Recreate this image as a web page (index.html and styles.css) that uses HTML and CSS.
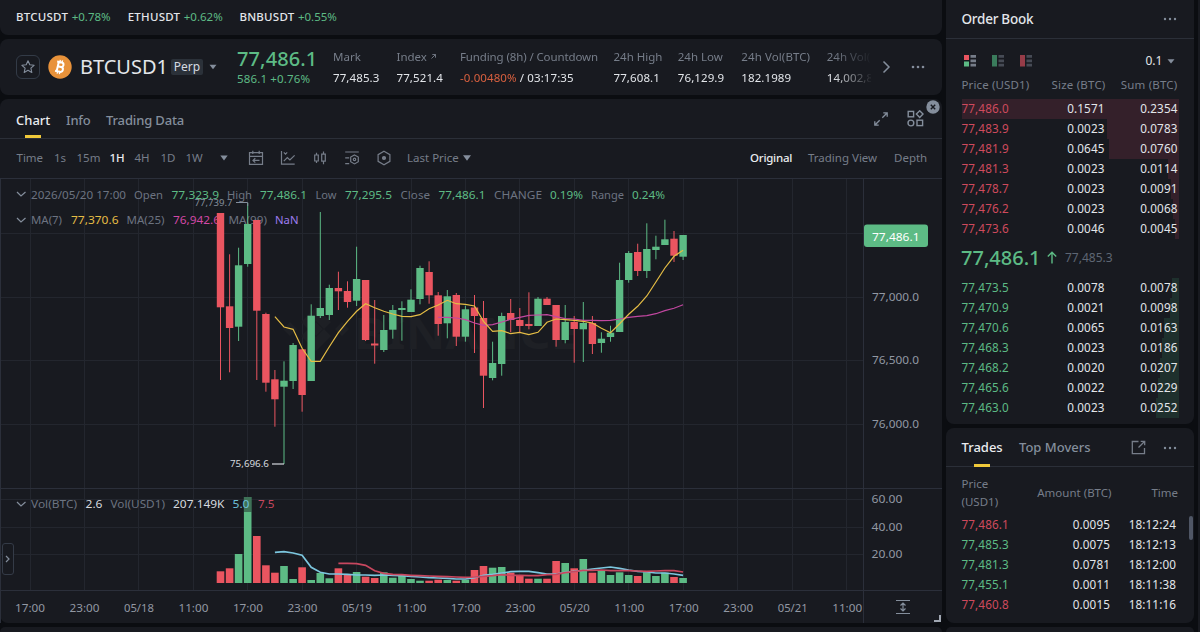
FILE: index.html
```html
<!DOCTYPE html>
<html lang="en">
<head>
<meta charset="utf-8">
<title>BTCUSD1 Perp</title>
<link rel="stylesheet" href="styles.css">
</head>
<body>
<div class="app">
  <main class="left">
    <section class="panel ticker">
      <span class="pair p1"><b>BTCUSDT</b> <i class="up">+0.78%</i></span>
      <span class="pair p2"><b>ETHUSDT</b> <i class="up">+0.62%</i></span>
      <span class="pair p3"><b>BNBUSDT</b> <i class="up">+0.55%</i></span>
    </section>

    <section class="panel header">
      <div class="fav"><svg width="16" height="16" viewBox="0 0 16 16"><path d="M8 1.800l1.800 4 4.300.5-3.200 2.900.9 4.300L8 11.300l-3.800 2.200.9-4.300L1.900 6.300l4.300-.5z" fill="none" stroke="#848e9c" stroke-width="1.1" stroke-linejoin="round"/></svg></div>
      <svg class="coin" width="24" height="24" viewBox="0 0 24 24"><circle cx="12" cy="12" r="11.700" fill="#e8923a"/><g transform="rotate(13 12 12)" fill="none" stroke="#fff"><path d="M9.700 7.300v9.400M8 7.300h4.700a2.200 2.200 0 0 1 0 4.500H9.700h3.300a2.400 2.400 0 0 1 0 4.900H8" stroke-width="2"/><path d="M10.700 4.900v2.400M13 4.900v2.400M10.700 16.700v2.400M13 16.700v2.400" stroke-width="1.300"/></g></svg>
      <h1 class="symbol">BTCUSD1</h1>
      <span class="perp">Perp</span>
      <svg class="caret" width="8" height="6" viewBox="0 0 8 6"><path d="M.5.8h7L4 5.300z" fill="#848e9c"/></svg>
      <div class="last"><div class="last-price">77,486.1</div><div class="last-change">586.1 +0.76%</div></div>
      <div class="stats">
        <div><span class="lbl">Mark</span><span class="val">77,485.3</span></div>
        <div><span class="lbl">Index<svg width="5" height="5" viewBox="0 0 5 5"><path d="M.5 4.500l4-4M1.300.5h3.200v3.200" fill="none" stroke="#767d89" stroke-width=".9"/></svg></span><span class="val">77,521.4</span></div>
        <div><span class="lbl">Funding (8h) / Countdown</span><span class="val"><em>-0.00480%</em> / 03:17:35</span></div>
        <div><span class="lbl">24h High</span><span class="val">77,608.1</span></div>
        <div><span class="lbl">24h Low</span><span class="val">76,129.9</span></div>
        <div><span class="lbl">24h Vol(BTC)</span><span class="val">182.1989</span></div>
        <div><span class="lbl">24h Vol(USD1)</span><span class="val">14,002,818.6</span></div>
      </div>
      <svg class="next" width="9" height="14" viewBox="0 0 9 14"><path d="M1.500 1.500L7 7l-5.500 5.500" fill="none" stroke="#848e9c" stroke-width="1.500"/></svg>
      <svg class="dots" width="14" height="4" viewBox="0 0 14 4" fill="#848e9c"><circle cx="2" cy="2" r="1.300"/><circle cx="7" cy="2" r="1.300"/><circle cx="12" cy="2" r="1.300"/></svg>
    </section>

    <section class="panel chart-panel">
      <nav class="tabs">
        <a class="tab on t1">Chart</a><a class="tab t2">Info</a><a class="tab t3">Trading Data</a>
        <svg class="expand" width="16" height="16" viewBox="0 0 16 16" fill="none" stroke="#848e9c" stroke-width="1.300"><path d="M9.300 6.700l4.500-4.500M10.300 1.800h3.900v3.900M6.700 9.300l-4.500 4.500M1.800 10.300v3.900h3.900"/></svg>
        <svg class="widgets" width="17" height="17" viewBox="0 0 17 17" fill="none" stroke="#848e9c" stroke-width="1.400"><rect x="1.200" y="1.400" width="5.400" height="5.400"/><path d="M12.700.8l3.300 3.300-3.300 3.300-3.300-3.300z"/><circle cx="3.900" cy="13" r="2.900"/><rect x="10" y="10.200" width="5.600" height="5.400"/></svg>
      </nav>
      <div class="close"><svg width="14" height="14" viewBox="0 0 14 14"><circle cx="7" cy="7" r="6.700" fill="#848e9c"/><path d="M4.800 4.800l4.400 4.400M9.200 4.800L4.800 9.200" stroke="#181a20" stroke-width="1.400"/></svg></div>
      <div class="toolbar">
        <span>Time</span><span>1s</span><span>15m</span><span class="on">1H</span><span>4H</span><span>1D</span><span>1W</span>
        <svg width="8" height="6" viewBox="0 0 8 6"><path d="M.3.6h7.400L4 5.600z" fill="#848e9c"/></svg>
        <svg width="16" height="16" viewBox="0 0 16 16" fill="none" stroke="#767d89" stroke-width="1.200"><path d="M1.500 2.700h13v11.700h-13zM1.500 6.300h13M4.800.8v3.200M11.200.8v3.200M11.500 10.400H5M7.300 8.200L5 10.400l2.300 2.200"/></svg>
        <svg width="16" height="16" viewBox="0 0 16 16" fill="none" stroke="#767d89" stroke-width="1.200"><path d="M1.500 1v13.200h13.200M3.800 11.200l3.500-3.700 2.600 2.500 4.700-4.600M3.800 2.400l1.700 1.700 1.700-1.700"/></svg>
        <svg width="16" height="16" viewBox="0 0 16 16" fill="none" stroke="#767d89" stroke-width="1.200"><path d="M2.700 5h3.600v6H2.700zM4.500 2.800V5M4.500 11v2M9.700 4.200h3.600v7H9.700zM11.500 1.500v2.700M11.500 11.200v3.100"/></svg>
        <svg width="16" height="16" viewBox="0 0 16 16" fill="none" stroke="#767d89" stroke-width="1.200"><path d="M1.200 2h13.600M1.200 7.800h4M1.200 13.600h4M10.500 4.900l3.800 2.200v4.600l-3.800 2.200-3.800-2.200V7.100z"/><circle cx="10.500" cy="9.400" r="1.200"/></svg>
        <svg width="16" height="16" viewBox="0 0 16 16" fill="none" stroke="#767d89" stroke-width="1.200"><path d="M8 1.300l5.900 3.400v6.600L8 14.700l-5.900-3.400V4.700z"/><circle cx="8" cy="8" r="1.500" fill="#767d89"/></svg>
        <span class="lp">Last Price</span>
        <svg width="8" height="6" viewBox="0 0 8 6"><path d="M0 .3h8L4 5.800z" fill="#848e9c"/></svg>
        <span class="on orig">Original</span><span class="tv">Trading View</span><span>Depth</span>
      </div>
      <svg id="chart" class="chart" width="942" height="445" viewBox="0 178 942 445"></svg>
    </section>
    <section class="panel below"></section>
  </main>

  <aside class="right">
    <section class="panel book">
      <div class="head"><h2>Order Book</h2>
        <svg width="14" height="4" viewBox="0 0 14 4" fill="#848e9c"><circle cx="2" cy="2" r="1.200"/><circle cx="7" cy="2" r="1.200"/><circle cx="12" cy="2" r="1.200"/></svg>
      </div>
      <div class="modes">
        <svg width="12" height="12" viewBox="0 0 12 12"><path d="M0 0h5v5H0z" fill="#ea5560"/><path d="M0 6.500h5v5H0z" fill="#5dbb85"/><path d="M6.500 0H12v2.700H6.500zM6.500 4.400H12v2.800H6.500zM6.500 8.800H12v2.700H6.500z" fill="#767d89"/></svg>
        <svg width="12" height="12" viewBox="0 0 12 12"><path d="M0 0h5v11.500H0z" fill="#3a7c5c"/><path d="M6.500 0H12v2.700H6.500zM6.500 4.400H12v2.800H6.500zM6.500 8.800H12v2.700H6.500z" fill="#464b55"/></svg>
        <svg width="12" height="12" viewBox="0 0 12 12"><path d="M0 0h5v11.500H0z" fill="#963c48"/><path d="M6.500 0H12v2.700H6.500zM6.500 4.400H12v2.800H6.500zM6.500 8.800H12v2.700H6.500z" fill="#464b55"/></svg>
        <span class="step">0.1</span>
        <svg width="8" height="5" viewBox="0 0 8 5"><path d="M.5.3h7L4 4.600z" fill="#848e9c"/></svg>
      </div>
      <div class="cols"><span>Price (USD1)</span><span>Size (BTC)</span><span>Sum (BTC)</span></div>
      <div id="asks" class="rows sell"></div>
      <div class="mid"><strong>77,486.1</strong>
        <svg width="10" height="13" viewBox="0 0 10 13"><path d="M5 12.500V1.300M.8 5.500L5 1.200l4.200 4.300" fill="none" stroke="#5dbb85" stroke-width="1.400"/></svg>
        <span>77,485.3</span></div>
      <div id="bids" class="rows buy"></div>
    </section>
    <section class="panel trades">
      <div class="ttabs"><a class="tab on">Trades</a><a class="tab movers">Top Movers</a>
        <svg width="15" height="15" viewBox="0 0 15 15" fill="none" stroke="#767d89" stroke-width="1.300"><path d="M7.500 1.500H1.300v12.200h12.200V8M7.500 7.500l5.500-5.500M9.700 1.300h4v4"/></svg>
        <svg width="14" height="4" viewBox="0 0 14 4" fill="#848e9c"><circle cx="2" cy="2" r="1.200"/><circle cx="7" cy="2" r="1.200"/><circle cx="12" cy="2" r="1.200"/></svg>
      </div>
      <div class="tcols"><span>Price<br>(USD1)</span><span>Amount (BTC)</span><span>Time</span></div>
      <div id="trades" class="rows"></div>
      <i class="scroll"></i>
    </section>
    <section class="panel below"></section>
  </aside>
  <div class="edge"></div>
</div>
<script src="app.js"></script>
</body>
</html>
```
FILE: styles.css
```css
* { box-sizing: border-box; }
body {
  margin: 0; width: 1200px; height: 632px; overflow: hidden;
  background: #0b0d11; color: #e3e6ea;
  font: 12px/16px "Noto Sans", "Open Sans", sans-serif;
}
h1, h2 { margin: 0; font-weight: 400; }
b { font-weight: 500; }
i, em { font-style: normal; }
svg { display: block; flex: none; }
.app { display: grid; grid-template-columns: 942px 248px 2px; column-gap: 4px; height: 632px; }
.left, .right { display: flex; flex-direction: column; gap: 4px; min-width: 0; }
.panel { background: #181a20; border-radius: 8px; flex: none; }
.edge { background: #181a20; }
.up { color: #5dbb85; }

.ticker { height: 35px; display: flex; align-items: center; padding: 0 0 1px 16px; font-size: 11.500px; border-radius: 0 0 8px 8px; }
.pair { white-space: nowrap; }
.pair b { letter-spacing: .25px; }
.p1, .p2 { width: 111.700px; }
.ticker .up { letter-spacing: 0; margin-left: .5px; }

.header { height: 56px; display: flex; align-items: center; padding-left: 16px; }
.fav { width: 24px; height: 24px; border: 1px solid #333b47; border-radius: 6px; display: grid; place-items: center; }
.coin { margin-left: 8px; }
.symbol { margin-left: 8px; width: 91px; font-size: 20px; line-height: 28px; letter-spacing: 0; }
.perp { width: 32px; height: 16px; background: #2b3139; border-radius: 2px; font-size: 12px; line-height: 15px; text-align: center; color: #d5dae0; }
.caret { margin-left: 6px; }
.last { margin-left: 20px; width: 96px; color: #5dbb85; white-space: nowrap; position: relative; top: -1px; }
.last-price { font-size: 20px; line-height: 24px; font-weight: 500; letter-spacing: .1px; }
.last-change { font-size: 11.500px; line-height: 15px; letter-spacing: .15px; }
.stats {
  display: grid; grid-template-columns: 63.500px 63.500px 153.500px 64.300px 63.500px 85.500px 44px;
  width: 538px; overflow: hidden; white-space: nowrap; margin-top: -1px;
  mask-image: linear-gradient(90deg, #000 500px, transparent 540px);
}
.stats > div { display: flex; flex-direction: column; gap: 4px; }
.stats span { font-size: 11.500px; line-height: 17px; }
.stats .val { letter-spacing: .1px; }
.lbl { color: #767d89; }
.stats > :nth-child(3) .lbl { letter-spacing: -.12px; }
.stats > :nth-child(6) .lbl { letter-spacing: .1px; }
.lbl svg { display: inline-block; vertical-align: 2px; margin-left: 4px; }
.val em { color: #d9603f; }
.next { margin-left: 11px; }
.dots { margin-left: 20px; }

.chart-panel { height: 524px; position: relative; }
.tabs { height: 40px; border-bottom: 1px solid #2b2f38; display: flex; align-items: center; padding-left: 16px; }
.tab { font-size: 13px; line-height: 38px; height: 40px; color: #848e9c; font-weight: 500; white-space: nowrap; }
.tab.on { color: #eaecef; position: relative; }
.tab.on::after { content: ""; position: absolute; bottom: 1px; left: 50%; margin-left: -8px; width: 16px; height: 3px; background: #f0c93a; }
.tabs .tab { line-height: 42px; }
.t1 { width: 34px; }
.t2 { margin-left: 16px; width: 24px; letter-spacing: -.2px; }
.t3 { margin-left: 16px; width: 79px; letter-spacing: -.15px; }
.expand { margin-left: 688px; }
.widgets { margin-left: 18px; }
.close { position: absolute; left: 926px; top: 1px; }
.toolbar {
  height: 39px; display: grid; align-items: center; white-space: nowrap;
  grid-template-columns: 37.500px 22.500px 33px 25px 26px 25px 34px 28px 32px 32px 32px 32px 31.500px 56px 287px 58px 86px 34px;
  padding: 0 0 1px 16.500px; color: #767d89; font-size: 11.500px;
}
.toolbar .on { color: #eaecef; font-weight: 500; }
.toolbar .orig { letter-spacing: -.25px; }
.chart { font-family: "Noto Sans", "Open Sans", sans-serif; font-size: 11.500px; }
.below { height: 5px; border-radius: 8px 8px 0 0; }

.book { height: 424px; border-radius: 0 0 8px 8px; }
.head { height: 39px; border-bottom: 1px solid #2b2f38; padding: 0 17px 1px 15.500px; display: flex; justify-content: space-between; align-items: center; }
.head h2 { font-size: 13.500px; font-weight: 500; letter-spacing: -.25px; }
.modes { display: grid; grid-template-columns: 28px 28px 126px 21px 10px; align-items: center; padding-left: 17.500px; height: 30px; margin-top: 7px; }
.step { font-size: 12px; }
.cols, .row { display: grid; grid-template-columns: 74px 69px 73px; margin-left: 15.500px; text-align: right; white-space: nowrap; }
.cols { color: #767d89; font-size: 11.500px; height: 23px; line-height: 18px; letter-spacing: .2px; }
.row { line-height: 19px; height: 20px; font-size: 11.700px; letter-spacing: .12px; background-repeat: no-repeat; background-position: right; width: 217px; }
.cols > :first-child, .row > :first-child { text-align: left; }
.cols > :first-child { letter-spacing: .12px; }
.cols > :nth-child(2) { position: relative; left: 1px; }
.sell .row { background-image: linear-gradient(#34202a, #34202a); }
.buy .row { background-image: linear-gradient(#1e302d, #1e302d); }
.red { color: #cf4a5d; }
.green { color: #5dbb85; }
.mid { display: flex; align-items: center; height: 39px; padding: 0 0 2px 15px; color: #5dbb85; }
.mid strong { font-size: 20px; font-weight: 500; letter-spacing: 0; width: 86px; }
.mid span { color: #5e6673; margin-left: 8px; }

.trades { height: 195px; position: relative; }
.ttabs { height: 39px; display: grid; grid-template-columns: 41.500px 16px 112px 32px 14px; align-items: center; padding-left: 15.500px; border-bottom: 1px solid #2b2f38; }
.ttabs .tab { line-height: 39px; height: 39px; }
.ttabs .movers { grid-column: 3; }
.ttabs .tab.on::after { bottom: 0; }
.tcols { display: grid; grid-template-columns: 70px 80px 66.500px; margin: 8px 0 4px 15.500px; color: #767d89; font-size: 11.500px; line-height: 18px; align-items: center; text-align: right; height: 36px; }
.tcols > :first-child { text-align: left; }
#trades .row { grid-template-columns: 76px 72.500px 66px; }
.scroll { position: absolute; right: 1px; top: 88px; width: 4px; height: 24px; border-radius: 2px; background: #4f5665; }
```
FILE: app.js
```js
const UP = '#5dbb85', DOWN = '#ea5560';
const X0 = 220.5, STEP = 9.07;
const xAt = i => +(X0 + STEP * i).toFixed(1);

// [direction, body top, body bottom, wick top, wick bottom, volume top]
const candles = [
['r',213,307.3,213,380,571.3],['r',306.3,328,254.3,372.3,568.3],['g',265.3,326.7,247.7,341,554],['g',224,264,203,266.7,497],
['r',220,310.7,220,380,536],['r',314,382.7,312.7,391.7,565.3],['r',379.3,399.3,370,426.7,572.7],['g',380.7,386.7,361.3,464,566],
['g',345,381,343,389,579],['r',349.3,395,349.3,411.7,567.3],['g',315.7,381,304.3,381,580],['g',308,316,212,318,573],
['g',288,315,284.7,320,578.3],['r',288,291.3,271.7,310,568.3],['r',291,302,281.3,307.7,575],['g',279,300.7,246.7,306,572],
['r',280,340,280,341,576.7],['r',343.5,345.5,300,363.7,578],['g',330,350,315,352,572.3],['g',310,329.7,305,338.7,577.7],
['g',308,310,301.3,340.7,576],['g',299.7,312,289.3,312,579],['g',268,299,265.7,304.3,580.7],['r',272,295.3,261.3,303.7,580.7],
['r',295.3,324,292,335.7,579.7],['g',296.3,323.3,290,338.3,580],['r',295,336.7,293,346,580.7],['g',309.3,336.7,305.7,341.7,579.7],
['r',307.5,316,295,353,570],['r',318,375.7,301,408,566],['g',363,378,341.7,380.3,567.7],['g',316,364,312.7,375.7,567],
['r',313,320,299,332.3,572.7],['r',320,326,308,333,576],['r',324,326,292.3,329.3,578.7],['g',298.7,326,297,326,578.7],
['r',298.7,305,297,305,578.7],['r',305,340,305,346.7,561],['g',322,340,305,343.3,563],['r',322,329,316,362.7,568.3],
['g',323,329.3,302,362,559],['r',323,344,316,354,572.7],['g',338.7,343,332.3,352.7,571],['g',332.7,337,325.7,341.7,575],
['g',280,332,262.7,332,572.3],['g',253,280,251,282.7,575],['r',252,271,243.7,276,576],['g',249,271,223.3,278,572.3],
['g',246.7,250,235.7,259.3,576],['g',239.3,245,219.7,245,572.7],['r',238.7,255.7,231,262,577],['g',235,256.7,235,260,578]];

const ma7 = [316.7,327,329.3,348.3,361.3,361.3,346.7,332.7,321.3,311.3,303.7,307.7,311.3,314,316.3,316.7,314.7,308.7,305,300.3,303.7,304.3,306,321.3,331.3,330.7,333.7,332.3,334.7,332.3,322.3,319,319.7,320.3,321.3,323,328.3,332.7,323.7,314.3,306.3,296,282,268,256.3,250.3];
const ma25 = [317.3,317.3,318,319.7,323,325.3,324.7,322,319.3,317.3,315.3,315,314.7,316.7,318.7,319,320.3,320.3,320.7,320.3,319,317.3,316.3,315.7,313.7,310.7,308.3,304.7];
const volFast = [552.3,551.7,553,555.3,567.3,572.3,574,574,574.3,575,575,575.3,575,575.3,575.7,576.3,577,577.7,578,578.3,579,579,577.7,575.3,574.3,573,571.7,571.3,571.3,572.7,574,574,572.3,571.3,570.3,569,568,567,568.3,570,571.3,572,573,573,574,575.3];
const volSlow = [563.3,563.3,563.7,565.3,570.7,573.3,574.3,574.7,575.3,575.7,576,576.3,576.7,577,577.3,577,576.3,575.7,574.7,575.3,575.3,575.7,575.7,574.7,574.3,572.7,571.7,570.3,570.3,570,570.7,570.7,570.7,571,571.3,571,570.7,570.7,572];

const out = [];
const rect = (x, y, w, h, fill, extra = '') => out.push(`<rect x="${x}" y="${y}" width="${w}" height="${h}" fill="${fill}" ${extra}/>`);
const text = (s, x, y, fill, len, extra = '') => out.push(`<text x="${x}" y="${y}" fill="${fill}" ${len ? `textLength="${len}" lengthAdjust="spacingAndGlyphs"` : ''} ${extra}>${s}</text>`);
const line = (d, stroke, w = 1) => out.push(`<path d="${d}" fill="none" stroke="${stroke}" stroke-width="${w}"/>`);
const series = (ys, stroke, w) => {
  const first = candles.length - ys.length;
  line('M' + ys.map((y, i) => xAt(first + i) + ' ' + y).join('L'), stroke, w);
};

// Grid and pane borders
for (let i = 0; i < 16; i++) rect(Math.round(29.6 + i * 54.43), 179, 1, 412, '#23262e');
for (const y of [233, 297, 360, 424, 499, 527, 554]) rect(0, y, 863, 1, '#23262e');
for (const y of [178, 488, 590]) rect(0, y, 942, 1, '#2b2f3a');
rect(0, 178, 1, 445, '#2b2f3a');
rect(863, 178, 1, 445, '#2b2f3a');

// Watermark
out.push('<g fill="#1e2025"><path d="M316 307l15 15-7 7-8-8-8 8-7-7zM283 329l7-7 7 7-7 7zM309 329l7-7 7 7-7 7zM335 329l7-7 7 7-7 7zM301 336l7-7 8 8 8-8 7 7-15 15z"/></g>');
text('BINANCE', 354, 349, '#1e2025', 224, 'font-size="43" font-weight="700"');

// Legends
const G = '#6c7380';
line('M17 192l4 4 4.500-4', '#848e9c', 1.2);
line('M17 218l4 4 4.500-4', '#848e9c', 1.2);
line('M17 502l4 4 4.500-4', '#848e9c', 1.2);
[['2026/05/20 17:00',31,95,G],['Open',134,29,G],['77,323.9',171.500,47.500,UP],['High',227,25,G],['77,486.1',260,47,UP],['Low',315.500,21,G],['77,295.5',345,47,UP],['Close',400.500,29.500,G],['77,486.1',438.500,47,UP],['CHANGE',494,48,G],['0.19%',550,33,UP],['Range',591,33,G],['0.24%',632,33,UP]]
  .forEach(([s, x, w, c]) => text(s, x, 198.500, c, w));
[['MA(7)',31,31,G],['77,370.6',71,47.500,'#e5bd45'],['MA(25)',126.500,38,G],['76,942.6',173,47,'#d248a6'],['MA(99)',228.500,38.500,G],['NaN',275,23.500,'#9f7cf0']]
  .forEach(([s, x, w, c]) => text(s, x, 224.400, c, w));

// Volume bars and candles
candles.forEach(([k, top, bottom, high, low, vol], i) => {
  const c = k === 'g' ? UP : DOWN, x = xAt(i);
  rect(x - 3.800, vol, 7.600, +(583 - vol).toFixed(1), c);
  rect(x - .5, high, 1, +(low - high).toFixed(1), c);
  rect(x - 3.700, top, 7.400, +(bottom - top).toFixed(1), c);
});
rect(244, 497, 7.500, 15, '#181a20', 'opacity=".45"');
[['Vol(BTC)',31,46,G],['2.6',85.500,17,'#d5d9df'],['Vol(USD1)',110.500,54.500,G],['207.149K',173,51.500,'#d5d9df'],['5.0',232.500,17,'#6dc0d8'],['7.5',258,16.500,'#c8475f']]
  .forEach(([s, x, w, c]) => text(s, x, 508, c, w));
series(ma25, '#c247a0', 1.2);
series(ma7, '#e5bd45', 1.2);
series(volFast, '#7cc6de', 1.700);
series(volSlow, '#c8475f', 1.700);

// Extremes
text('77,739.7', 194.500, 205.500, '#848e9c', 38, 'font-size="9.500"');
line('M236 202.500h11.700V206', '#848e9c');
text('75,696.6', 230, 467, '#d5d9df', 39, 'font-size="9.500"');
line('M272 464h12', '#d5d9df', 1.200);

// Axes
const A = '#9298a3';
['17:00','23:00','05/18','11:00','17:00','23:00','05/19','11:00','17:00','23:00','05/20','11:00','17:00','23:00','05/21','11:00']
  .forEach((s, i) => text(s, 30 + i * 54.48, 612, A, 30, 'text-anchor="middle"'));
[['77,000.0',301],['76,500.0',364],['76,000.0',428]].forEach(([s, y]) => text(s, 872, y, A, 47));
[['60.00',503],['40.00',530.500],['20.00',558]].forEach(([s, y]) => text(s, 871.500, y, A, 31));
rect(864, 224.500, 64, 22.500, UP, 'rx="3"');
text('77,486.1', 872, 240.500, '#fff', 47.500);
line('M896 600.500h14M896 613.500h14M903 603v8M900.500 605.500l2.500-2.500 2.500 2.500M900.500 608.500l2.500 2.500 2.500-2.500', '#848e9c', 1.200);
line('M940 615v6h-6', '#a0a7b2', 2);
out.push('<rect x="2.500" y="543.500" width="11" height="31" rx="2.500" fill="#181a20" stroke="#343b47"/>');
line('M6 556l3 3-3 3', '#848e9c', 1.200);
document.getElementById('chart').innerHTML = out.join('');

// Order book and trades
const bookRows = (id, tone, rows) => {
  document.getElementById(id).innerHTML = rows.map(([p, s, t, w]) =>
    `<div class="row" style="background-size:${w}px 100%"><span class="${tone}">${p}</span><span>${s}</span><span>${t}</span></div>`).join('');
};
bookRows('asks', 'red', [['77,486.0','0.1571','0.2354',217],['77,483.9','0.0023','0.0783',72],['77,481.9','0.0645','0.0760',70],['77,481.3','0.0023','0.0114',11],['77,478.7','0.0023','0.0091',8],['77,476.2','0.0023','0.0068',6],['77,473.6','0.0046','0.0045',4]]);
bookRows('bids', 'green', [['77,473.5','0.0078','0.0078',7],['77,470.9','0.0021','0.0098',9],['77,470.6','0.0065','0.0163',15],['77,468.3','0.0023','0.0186',17],['77,468.2','0.0020','0.0207',19],['77,465.6','0.0022','0.0229',21],['77,463.0','0.0023','0.0252',23]]);
document.getElementById('trades').innerHTML = [['red','77,486.1','0.0095','18:12:24'],['green','77,485.3','0.0075','18:12:13'],['green','77,481.3','0.0781','18:12:00'],['green','77,455.1','0.0011','18:11:38'],['red','77,460.8','0.0015','18:11:16']]
  .map(([c, p, a, t]) => `<div class="row"><span class="${c}">${p}</span><span>${a}</span><span>${t}</span></div>`).join('');
```
